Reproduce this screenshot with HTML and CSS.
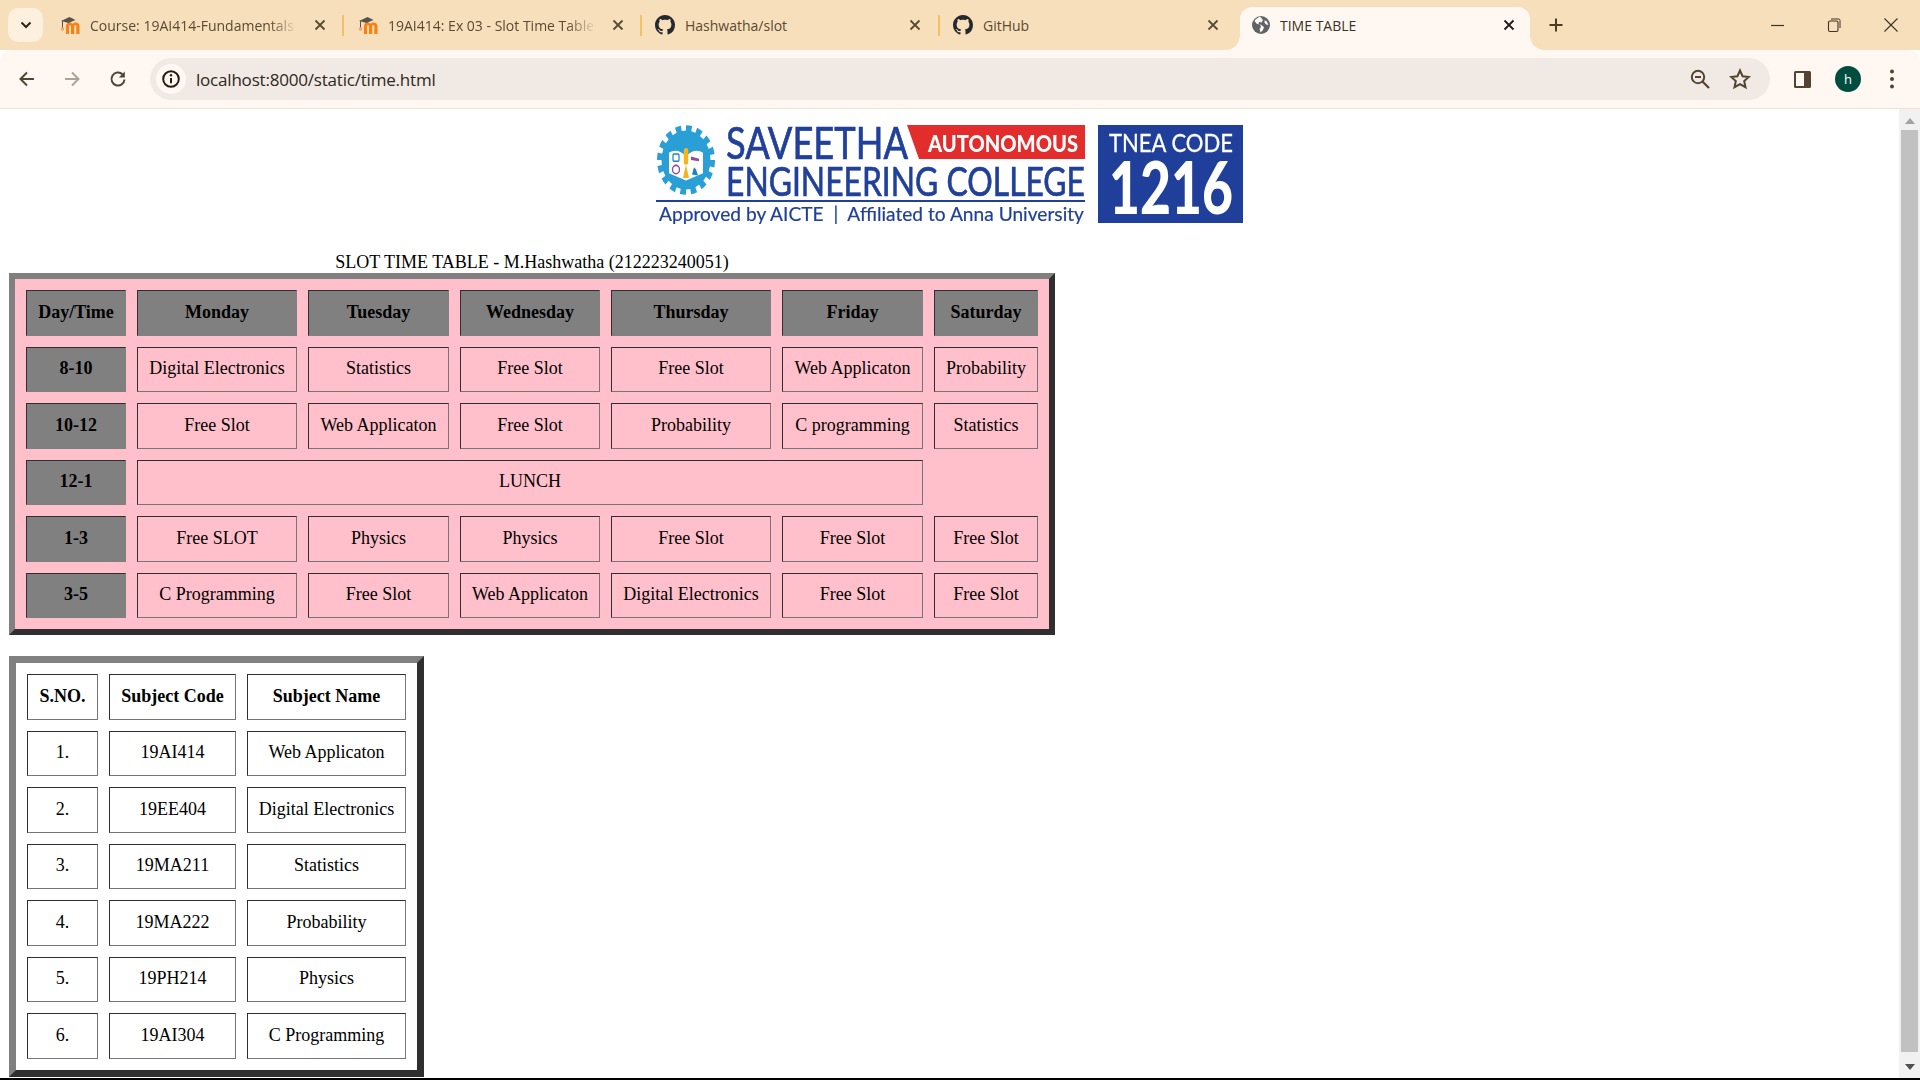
FILE: index.html
```html
<!DOCTYPE html>
<html lang="en">
<head>
<meta charset="utf-8">
<title>TIME TABLE</title>
<link rel="stylesheet" href="styles.css">
</head>
<body>
<svg class="defs" width="0" height="0" aria-hidden="true">
  <symbol id="gh" viewBox="0 0 16 16"><path d="M8 0C3.58 0 0 3.58 0 8c0 3.54 2.29 6.53 5.47 7.59.4.07.55-.17.55-.38 0-.19-.01-.82-.01-1.49-2.01.37-2.53-.49-2.69-.94-.09-.23-.48-.94-.82-1.13-.28-.15-.68-.52-.01-.53.63-.01 1.08.58 1.23.82.72 1.21 1.87.87 2.33.66.07-.52.28-.87.51-1.07-1.78-.2-3.64-.89-3.64-3.95 0-.87.31-1.59.82-2.15-.08-.2-.36-1.02.08-2.12 0 0 .67-.21 2.2.82.64-.18 1.32-.27 2-.27s1.36.09 2 .27c1.53-1.04 2.2-.82 2.2-.82.44 1.1.16 1.92.08 2.12.51.56.82 1.27.82 2.15 0 3.07-1.87 3.75-3.65 3.95.29.25.54.73.54 1.48 0 1.07-.01 1.93-.01 2.2 0 .21.15.46.55.38A8.013 8.013 0 0016 8c0-4.42-3.58-8-8-8z" fill="#24292f"/></symbol>
  <symbol id="moodle" viewBox="0 0 20 20">
    <path d="M6 19v-8c0-2.200 1.500-3.600 3.500-3.600 1.300 0 2.300.5 3 1.500.8-1 1.900-1.500 3-1.500 2.500 0 4 1.500 4 3.800V19h-3.200v-7.500c0-.9-.3-1.300-1-1.300s-1.100.4-1.100 1.300V19h-3.200v-7.500c0-.9-.3-1.300-1-1.300s-1 .4-1 1.300V19z" fill="#f98012"/>
    <path d="M1 6 9.500 2 15.500 5 8.500 8 3 6.600V13H2V6.300z" fill="#58534a"/>
    <circle cx="2.500" cy="14" r="1.800" fill="#f9a45c"/>
  </symbol>
  <symbol id="x" viewBox="0 0 16 16"><path d="M3.500 3.500l9 9M12.500 3.500l-9 9" fill="none" stroke="currentColor" stroke-width="1.800"/></symbol>
</svg>
<div class="app">
  <header class="tabstrip">
    <button class="tablist"><svg width="14" height="14" viewBox="0 0 14 14"><path d="M2.500 4.500 7 9l4.500-4.500" fill="none" stroke="#2b2418" stroke-width="2"/></svg></button>
    <div class="tab sep"><svg class="fav"><use href="#moodle"/></svg><span class="title fade">Course: 19AI414-Fundamentals</span><svg class="close"><use href="#x"/></svg></div>
    <div class="tab sep"><svg class="fav"><use href="#moodle"/></svg><span class="title fade">19AI414: Ex 03 - Slot Time Table</span><svg class="close"><use href="#x"/></svg></div>
    <div class="tab sep ghtab"><svg class="fav"><use href="#gh"/></svg><span class="title">Hashwatha/slot</span><svg class="close"><use href="#x"/></svg></div>
    <div class="tab ghtab"><svg class="fav"><use href="#gh"/></svg><span class="title">GitHub</span><svg class="close"><use href="#x"/></svg></div>
    <div class="tab active">
      <svg class="fav globe" viewBox="0 0 20 20"><circle cx="10" cy="10" r="9" fill="#5f6368"/><path d="M9 1.500C7 3 4.500 3.500 3.500 6l2.500 3 3 .5 1 2.500-1.500 2 1 3.500 2.500-2.500 1-3-3.500-2.500-2-.5.5-2 2.500.500 1.500-2.500zM13.500 5.500l2 .5 2 4-2.500-.5-1.500-2z" fill="#fff8f2"/></svg>
      <span class="title strong">TIME TABLE</span><svg class="close dark"><use href="#x"/></svg>
    </div>
    <button class="newtab"><svg width="18" height="18" viewBox="0 0 18 18"><path d="M9 2.500v13M2.500 9h13" stroke="#4d3c22" stroke-width="2"/></svg></button>
    <div class="winctl">
      <span class="wbtn"><svg width="16" height="16" viewBox="0 0 16 16"><path d="M2 8.500h13" stroke="#3d3324" stroke-width="1.200"/></svg></span>
      <span class="wbtn"><svg width="16" height="16" viewBox="0 0 16 16"><rect x="2.500" y="4" width="9.500" height="10.500" rx="1.500" fill="none" stroke="#3d3324" stroke-width="1.100"/><path d="M5 2h7.500A1.500 1.500 0 0 1 14 3.500V11" fill="none" stroke="#3d3324" stroke-width="1"/></svg></span>
      <span class="wbtn"><svg width="16" height="16" viewBox="0 0 16 16"><path d="M1.500 1.500l13 13M14.500 1.500l-13 13" stroke="#3d3324" stroke-width="1.100"/></svg></span>
    </div>
  </header>
  <nav class="toolbar">
    <button class="tbtn"><svg width="20" height="20" viewBox="0 0 20 20"><path d="M17 10H4M10 3.500 3.500 10l6.500 6.500" fill="none" stroke="#524430" stroke-width="2"/></svg></button>
    <button class="tbtn"><svg width="20" height="20" viewBox="0 0 20 20"><path d="M3 10h13M10 3.500l6.500 6.500-6.500 6.500" fill="none" stroke="#a9a39b" stroke-width="2"/></svg></button>
    <button class="tbtn"><svg width="20" height="20" viewBox="0 0 20 20"><path d="M16.500 10.500a6.500 6.500 0 1 1-2-5.200" fill="none" stroke="#524430" stroke-width="2"/><path d="M16.800 2.500v6h-6z" fill="#524430"/></svg></button>
    <div class="omnibox">
      <span class="info"><svg width="20" height="20" viewBox="0 0 20 20"><circle cx="10" cy="10" r="7.800" fill="none" stroke="#231e14" stroke-width="2"/><path d="M10 9v5.200" stroke="#231e14" stroke-width="2"/><circle cx="10" cy="6.300" r="1.200" fill="#231e14"/></svg></span>
      <span class="url">localhost:8000/static/time.html</span>
      <svg class="obicon" width="22" height="22" viewBox="0 0 22 22"><circle cx="9" cy="9" r="6.200" fill="none" stroke="#524430" stroke-width="2"/><path d="M6 9h6" stroke="#524430" stroke-width="2"/><path d="M13.500 13.500 20 20" stroke="#524430" stroke-width="2.200"/></svg>
      <svg class="obicon star" width="22" height="22" viewBox="0 0 22 22"><path d="M11 2.500l2.600 5.700 6.200.7-4.600 4.200 1.300 6.100L11 16.100l-5.500 3.100 1.300-6.100-4.600-4.200 6.200-.7z" fill="none" stroke="#524430" stroke-width="2"/></svg>
    </div>
    <button class="tbtn panel"><svg width="20" height="20" viewBox="0 0 20 20"><rect x="2" y="2" width="17" height="17" rx="1.500" fill="#524430"/><rect x="4" y="4" width="8" height="13" fill="#fff8f2"/></svg></button>
    <button class="tbtn avatarbtn"><span class="avatar">h</span></button>
    <button class="tbtn menu"><svg width="20" height="22" viewBox="0 0 20 22"><circle cx="10" cy="3.500" r="2" fill="#524430"/><circle cx="10" cy="11" r="2" fill="#524430"/><circle cx="10" cy="18.500" r="2" fill="#524430"/></svg></button>
  </nav>
  <div class="viewport">
    <main class="page">
      <div class="logo">
        <svg class="logosvg" width="590" height="120" viewBox="654 109 590 120">
          <!-- seal -->
          <g transform="translate(685 160) scale(1 1.200) translate(-685 -158)">
            <circle cx="685" cy="158" r="25.500" fill="none" stroke="#2a9fd6" stroke-width="7" stroke-dasharray="5.500 4.500"/>
            <circle cx="685" cy="158" r="24.500" fill="#2a9fd6"/>
            <path d="M668 152c5-3 12-2 17 3 5-5 12-6 17-3v17l-17 6-17-6z" fill="#fff"/>
            <rect x="682.800" y="148" width="4.400" height="14" rx="2" fill="#f4b41a"/>
            <path d="M685 162l-3 11h6z" fill="#f4b41a"/>
            <rect x="672" y="153" width="6" height="6" rx="1" fill="none" stroke="#1b7fc4" stroke-width="1.200"/>
            <circle cx="675" cy="166" r="3.500" fill="none" stroke="#8e4a9e" stroke-width="1.300"/>
            <path d="M690 155l8 2v2l-8-1z" fill="#8e4a9e"/>
            <path d="M691 170l2-6 2 2 2 5z" fill="#1b7fc4"/>
          </g>
          <!-- wordmark -->
          <path d="M906 125h178v34H918z" fill="#e32d2d"/>
          <text class="autonomous" x="927" y="152" textLength="150" lengthAdjust="spacingAndGlyphs">AUTONOMOUS</text>
          <text class="wordmark" x="725" y="159" textLength="182" lengthAdjust="spacingAndGlyphs">SAVEETHA</text>
          <text class="wordmark two" x="725" y="195.500" textLength="359" lengthAdjust="spacingAndGlyphs">ENGINEERING COLLEGE</text>
          <rect x="655" y="200" width="429" height="2" fill="#21409a"/>
          <text class="approved" x="658" y="221" textLength="425" lengthAdjust="spacingAndGlyphs">Approved by AICTE  |  Affiliated to Anna University</text>
          <!-- code box -->
          <rect x="1097" y="125" width="145" height="98" fill="#1f3f9a"/>
          <text class="tnea" x="1170" y="152" text-anchor="middle" textLength="124" lengthAdjust="spacingAndGlyphs">TNEA CODE</text>
          <text class="code" x="1170" y="214" text-anchor="middle" textLength="124" lengthAdjust="spacingAndGlyphs">1216</text>
        </svg>
      </div>

      <table class="grid slot">
        <caption>SLOT TIME TABLE - M.Hashwatha (212223240051)</caption>
        <colgroup><col class="s1"><col class="s2"><col class="s3"><col class="s4"><col class="s5"><col class="s6"><col class="s7"></colgroup>
        <tr class="head"><th>Day/Time</th><th>Monday</th><th>Tuesday</th><th>Wednesday</th><th>Thursday</th><th>Friday</th><th>Saturday</th></tr>
        <tr><th>8-10</th><td>Digital Electronics</td><td>Statistics</td><td>Free Slot</td><td>Free Slot</td><td>Web Applicaton</td><td>Probability</td></tr>
        <tr><th>10-12</th><td>Free Slot</td><td>Web Applicaton</td><td>Free Slot</td><td>Probability</td><td>C programming</td><td>Statistics</td></tr>
        <tr><th>12-1</th><td colspan="5">LUNCH</td><td class="none"></td></tr>
        <tr><th>1-3</th><td>Free SLOT</td><td>Physics</td><td>Physics</td><td>Free Slot</td><td>Free Slot</td><td>Free Slot</td></tr>
        <tr><th>3-5</th><td>C Programming</td><td>Free Slot</td><td>Web Applicaton</td><td>Digital Electronics</td><td>Free Slot</td><td>Free Slot</td></tr>
      </table>

      <table class="grid subjects">
        <colgroup><col class="c1"><col class="c2"><col class="c3"></colgroup>
        <tr><th>S.NO.</th><th>Subject Code</th><th>Subject Name</th></tr>
        <tr><td>1.</td><td>19AI414</td><td>Web Applicaton</td></tr>
        <tr><td>2.</td><td>19EE404</td><td>Digital Electronics</td></tr>
        <tr><td>3.</td><td>19MA211</td><td>Statistics</td></tr>
        <tr><td>4.</td><td>19MA222</td><td>Probability</td></tr>
        <tr><td>5.</td><td>19PH214</td><td>Physics</td></tr>
        <tr><td>6.</td><td>19AI304</td><td>C Programming</td></tr>
      </table>
    </main>
    <aside class="scrollbar">
      <span class="arrow up"></span>
      <span class="thumb"></span>
      <span class="arrow down"></span>
    </aside>
  </div>
  <div class="screenedge"></div>
</div>
</body>
</html>
```
FILE: styles.css
```css
* { box-sizing: border-box; }
html, body { margin: 0; height: 100%; overflow: hidden; background: #fff; }
button { border: 0; padding: 0; background: none; display: flex; align-items: center; justify-content: center; }
.defs { display: block; height: 0; }

.app { height: 100vh; display: flex; flex-direction: column; }

/* tab strip */
.tabstrip { height: 50px; flex: none; display: flex; align-items: flex-end; background: #f6dfba; padding-left: 8px; font-family: "Open Sans", "Noto Sans", sans-serif; }
.tablist { width: 35px; height: 34px; margin: 0 3px 8px 0; border-radius: 10px; background: #fdf0df; }
.tab { position: relative; width: 298px; height: 43px; flex: none; display: flex; align-items: center; padding: 0 15px 7px 14px; }
.tab.ghtab { padding-left: 13px; }
.tab.sep::after { content: ""; position: absolute; right: 0; top: 8px; width: 2px; height: 21px; background: #f5c063; }
.fav { width: 20px; height: 20px; flex: none; margin-right: 10px; }
.title { width: 208px; flex: none; overflow: hidden; white-space: nowrap; font-size: 14px; color: #5a4a34; }
.title.fade { -webkit-mask-image: linear-gradient(to right, #000 86%, transparent 100%); mask-image: linear-gradient(to right, #000 86%, transparent 100%); }
.close { width: 16px; height: 16px; flex: none; margin-left: 14px; color: #5a4a34; }
.close.dark { color: #221c12; margin-left: 13px; }
.tab.active { width: 290px; margin-left: 2px; background: #fff8f2; border-radius: 12px 12px 0 0; padding-left: 11px; }
.globe { margin-right: 9px; }
.tab.active::before, .tab.active::after { content: ""; position: absolute; bottom: 0; width: 14px; height: 14px; }
.tab.active::before { left: -14px; background: radial-gradient(circle at 0 0, #f6dfba 13.500px, #fff8f2 14px); }
.tab.active::after { right: -14px; background: radial-gradient(circle at 100% 0, #f6dfba 13.500px, #fff8f2 14px); }
.title.strong { color: #3b3223; }
.newtab { width: 32px; height: 32px; margin: 0 0 9px 10px; }
.winctl { margin-left: auto; align-self: stretch; display: flex; padding-right: 1px; }
.wbtn { width: 57px; display: flex; align-items: center; justify-content: center; }

/* toolbar */
.toolbar { height: 59px; flex: none; display: flex; align-items: center; background: #fff8f2; border-bottom: 1px solid #f2e0d0; border-radius: 12px 12px 0 0; padding-left: 9px; box-shadow: 0 -12px 0 -12px #f6dfba; }
.tbtn { width: 36px; height: 36px; flex: none; margin-right: 10px; }
.tbtn:nth-child(2) { margin-left: -1px; }
.omnibox { width: 1620px; height: 42px; flex: none; margin-left: 4px; display: flex; align-items: center; background: #f1e9e3; border-radius: 21px; padding: 0 19px 0 6px; }
.info { width: 30px; height: 30px; border-radius: 50%; background: #fff8f2; display: flex; align-items: center; justify-content: center; flex: none; }
.url { margin-left: 10px; flex: 1; font-family: "Open Sans", "Noto Sans", sans-serif; font-size: 17px; letter-spacing: -.2px; color: #2d2820; }
.obicon { flex: none; margin-right: 18px; }
.obicon.star { margin-right: 0; }
.panel { margin-left: 14px; }
.avatarbtn { margin-right: 8px; }
.menu { margin-right: 0; }
.avatar { width: 26px; height: 26px; border-radius: 50%; background: #004d40; color: #fff; font: 13px "Open Sans", sans-serif; display: flex; align-items: center; justify-content: center; }

/* page */
.viewport { flex: 1; min-height: 0; display: flex; }
.page { flex: 1; min-width: 0; padding-left: 9px; font-family: "Liberation Serif", "Times New Roman", serif; font-size: 18px; color: #000; }
.logo { height: 143px; display: flex; justify-content: center; margin-left: -9px; }
.logosvg { display: block; filter: blur(.35px); }
.wordmark { font: 400 45px "Lato", sans-serif; fill: #21409a; stroke: #21409a; stroke-width: .7px; }
.wordmark.two { font-size: 40px; }
.autonomous { font: 900 23px "Lato", sans-serif; fill: #fff; }
.approved { font: 400 18.500px "Lato", sans-serif; fill: #21409a; stroke: #21409a; stroke-width: .2px; white-space: pre; }
.tnea { font: 400 25px "Lato", sans-serif; fill: #fff; stroke: #fff; stroke-width: .3px; }
.code { font: 900 72px "Lato", sans-serif; fill: #fff; }

.grid { border-collapse: separate; border-spacing: 11px; table-layout: fixed; border-style: solid; border-color: #808080 #2f2f2f #2f2f2f #808080; }
.grid caption { height: 21px; line-height: 21px; text-align: center; white-space: nowrap; }
.grid th, .grid td { padding: 0 0 2px; height: 45.500px; line-height: 20px; text-align: center; vertical-align: middle; white-space: nowrap; border: 1px solid; border-color: #2f2f2f #767676 #767676 #2f2f2f; }
.grid th { font-weight: 700; }
.grid td.none { border: 0; }

.slot { border-width: 6px; background: #ffc0cb; width: 1046px; }
.slot th { background: #808080; border-color: #2f2f2f #808080 #808080 #2f2f2f; }
.s1 { width: 100px; } .s2 { width: 160px; } .s3 { width: 141px; } .s4 { width: 140px; }
.s5 { width: 160px; } .s6 { width: 141px; } .s7 { width: 104px; }

.subjects { border-width: 7px; background: #fff; width: 415px; margin-top: 21px; }
.c1 { width: 71px; } .c2 { width: 127px; } .c3 { width: 159px; }

/* scrollbar */
.scrollbar { width: 21px; flex: none; background: #f1f1f1; display: flex; flex-direction: column; align-items: center; }
.arrow { width: 0; height: 0; flex: none; border-left: 5px solid transparent; border-right: 5px solid transparent; }
.arrow.up { border-bottom: 6px solid #a3a3a3; margin: 9px 0 6px; }
.thumb { flex: 1; width: 17px; background: #c1c1c1; }
.arrow.down { border-top: 6px solid #505050; margin: 12px 0 8px; }

.screenedge { height: 2px; flex: none; background: #000; }
```
